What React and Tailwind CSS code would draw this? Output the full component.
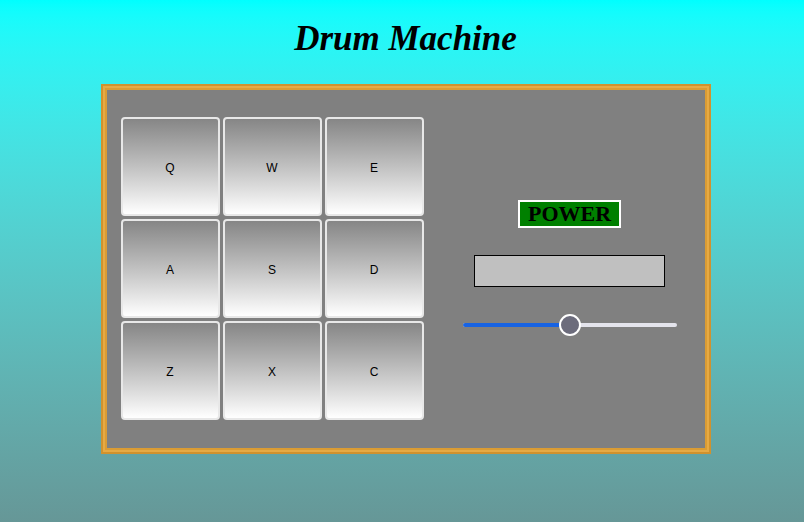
import React from "react";

const keys = ["Q", "W", "E", "A", "S", "D", "Z", "X", "C"];

export default function App() {
  return (
    <div className="min-h-[522px] w-full bg-gradient-to-b from-[#00ffff] to-[#669797] pl-[7px]">
      <h1
        className="pt-[19px] h-[60px] text-center text-[35px] leading-[40px] font-bold italic text-black"
        style={{ fontFamily: '"Liberation Serif", serif' }}
      >
        Drum Machine
      </h1>
      <div className="mx-auto mt-[24px] w-[610px] border-2 border-[#d0922e] bg-[#e6aa44] p-[2px]">
        <div className="flex h-[362px] border-2 border-[#da9c34] bg-[#808080]">
          <div className="grid h-fit grid-cols-[99px_99px_99px] grid-rows-[99px_99px_99px] gap-[3px] pl-[14px] pt-[27px]">
            {keys.map((k) => (
              <button
                key={k}
                className="flex items-center justify-center rounded-[4px] border-2 border-[#e8e8e8] bg-gradient-to-b from-[#868686] to-[#ffffff] pt-[3px] text-[12px] text-black"
                style={{ fontFamily: '"Liberation Sans", Arial, sans-serif' }}
              >
                {k}
              </button>
            ))}
          </div>
          <div className="flex flex-1 flex-col items-center pt-[110px] pl-[11px]">
            <div
              className="border-2 border-white bg-[#008000] px-[8px] text-[22px] font-bold leading-[24px] text-black"
              style={{ fontFamily: '"Liberation Serif", serif' }}
            >
              POWER
            </div>
            <div className="mt-[27px] h-[32px] w-[191px] border border-black bg-[#c0c0c0]" />
            <div className="relative mt-[36px] h-[4px] w-[214px] rounded-full bg-[#e4e4ec]">
              <div className="absolute left-0 top-0 h-[4px] w-[107px] rounded-full bg-[#1763e3]" />
              <div className="absolute left-[96px] top-[-9px] h-[22px] w-[22px] rounded-full border-2 border-white bg-[#6c6c7c]" />
            </div>
          </div>
        </div>
      </div>
    </div>
  );
}
